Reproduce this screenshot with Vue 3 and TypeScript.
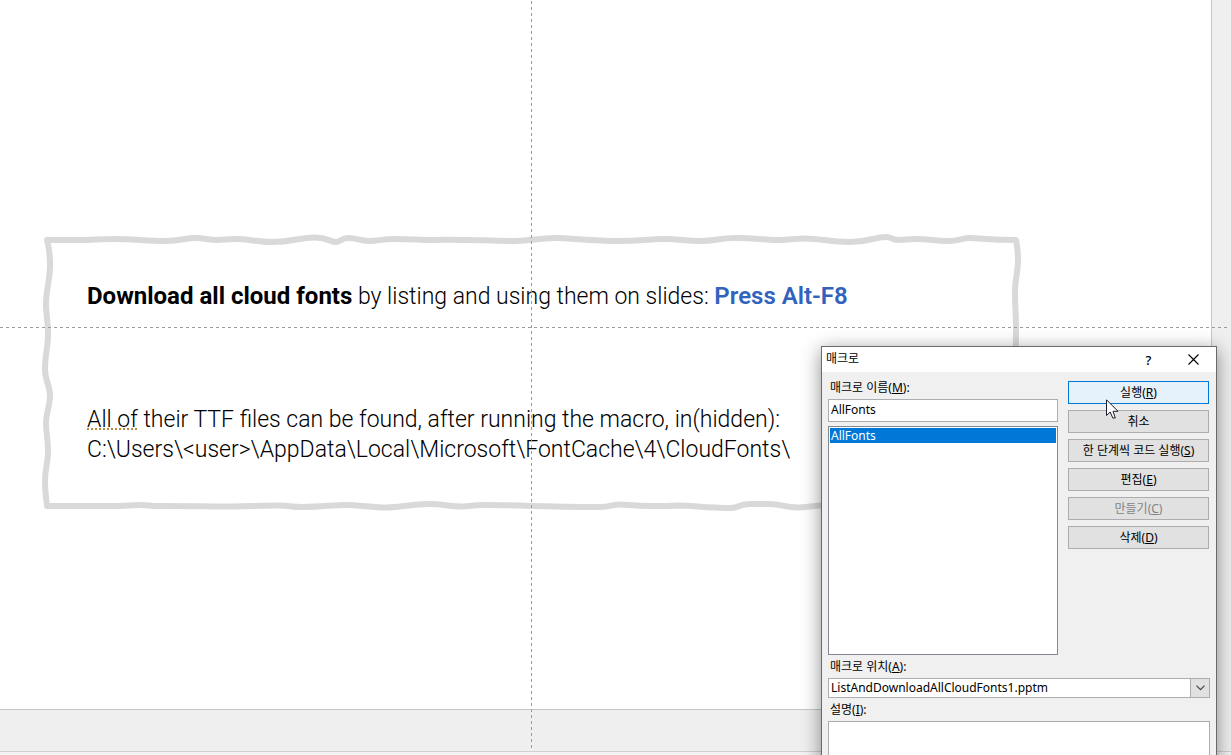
<script setup lang="ts">
import { ref } from 'vue'

interface Action {
  label: string
  key?: string
  disabled?: boolean
  primary?: boolean
}

const actions: Action[] = [
  { label: '실행', key: 'R', primary: true },
  { label: '취소' },
  { label: '한 단계씩 코드 실행', key: 'S' },
  { label: '편집', key: 'E' },
  { label: '만들기', key: 'C', disabled: true },
  { label: '삭제', key: 'D' },
]

const macros: string[] = ['AllFonts']
const selected = ref<string>('AllFonts')
const macroName = ref<string>('AllFonts')
const location = ref<string>('ListAndDownloadAllCloudFonts1.pptm')
const description = ref<string>('')

function choose(name: string): void {
  selected.value = name
  macroName.value = name
}
</script>

<template>
  <div class="editor">
    <main class="slide">
      <section class="sketch-box">
        <svg class="sketch-frame" viewBox="0 0 978 274" preserveAspectRatio="none" aria-hidden="true">
          <path
            d="M5 5C14 5 25 5 35 5C50 5 58 4 73 4C90 4 105 6 123 6C139 6 143 3 154 3C163 3 166 5 176 5C183 5 185 4 193 4C207 4 215 7 230 7C252 7 256 2.500 273 2.500C286 2.500 288 7 294 7C298 7 299 3 306 3C316 3 319 6 328 6C336 6 340 4 352 4C368 4 378 5 388 5C420 4 445 6 473 6C490 6 495 3 513 3C530 3 548 6 578 6C600 6 604 4 623 4C638 4 643 6 658 6C675 6 676 3 693 3C715 3 723 5 738 5C746 5 753 3.500 763 3.500C780 3.500 785 7 808 7C828 7 832 2 844 2C850 2 850 5 857 5C863 5 866 4 873 4C888 4 893 6 906 6C918 6 919 3 928 3C938 3 947 5 974 5C975 12 976 14 976 25C976 38 973 44 973 56C973 72 974 80 974 92C974 130 972 150 974 180C976 215 972 240 975 271C940 273 905 268 860 270C835 272 815 269 779 270.500C769 271 765 272.500 756 272.500C742 272.500 740 269 728 269C715 269 713 269 708 269C697 269 698 273 688 273C665 273 650 270.500 636 270.500C626 271 618 271 608 271C592 271 585 269.500 578 269.500C570 269.500 568 272 558 272C520 272 470 270 442 270C430 270 425 271.500 418 271.500C404 271 398 269 388 269C368 269 358 272.500 345 272.500C330 272.500 318 270 303 270C290 270 280 272 260 272C250 272 246 270.500 238 270.500C218 270.500 200 271.500 178 271.500C162 271 128 271 118 271C106 271 108 270 98 270C88 270 84 271 68 271L5 271C4 261 3 258 3 246C3 233 6 229 6 216C6 203 4 199 4 188C4 178 8 172 8 160C8 151 3 146 3 134C3 119 6 113 6 99C6 85 4 80 4 69C4 54 8 46 8 30C8 18 7 12 5 5Z"
            vector-effect="non-scaling-stroke"
          />
        </svg>
        <p class="line">
          <strong class="heavy">Download all cloud fonts</strong> by listing and using them on slides:
          <strong class="accent">Press Alt-F8</strong>
        </p>
        <p class="line path-note">
          <span class="grammar">All of</span> their TTF files can be found, after running the macro, in(hidden):<br />
          C:\Users\&lt;user&gt;\AppData\Local\Microsoft\FontCache\4\CloudFonts\
        </p>
      </section>
    </main>
    <div class="gutter"></div>
    <div class="pasteboard"></div>
    <div class="status"></div>
    <i class="guide guide-v"></i>
    <i class="guide guide-h"></i>

    <section class="dialog" role="dialog" aria-labelledby="dialog-title">
      <header class="titlebar">
        <h1 id="dialog-title">매크로</h1>
        <button class="caption-btn" type="button" aria-label="도움말">?</button>
        <button class="caption-btn" type="button" aria-label="닫기">
          <svg width="11" height="11" viewBox="0 0 11 11" aria-hidden="true">
            <path d="M0.500 0.500L10.500 10.500M10.500 0.500L0.500 10.500" fill="none" stroke="#000" stroke-width="1.100" />
          </svg>
        </button>
      </header>
      <form class="content" @submit.prevent>
        <div class="upper">
          <div class="names">
            <label for="macro-name">매크로 이름(<u>M</u>):</label>
            <input id="macro-name" v-model="macroName" class="field" type="text" />
            <ul class="list" role="listbox" aria-label="매크로">
              <li
                v-for="m in macros"
                :key="m"
                role="option"
                :aria-selected="m === selected"
                :class="{ active: m === selected }"
                @click="choose(m)"
              >{{ m }}</li>
            </ul>
          </div>
          <div class="actions">
            <button
              v-for="a in actions"
              :key="a.label"
              type="button"
              class="action"
              :class="{ primary: a.primary }"
              :disabled="a.disabled"
            >{{ a.label }}<template v-if="a.key">(<u>{{ a.key }}</u>)</template></button>
          </div>
        </div>
        <label for="macro-location">매크로 위치(<u>A</u>):</label>
        <div class="combo">
          <select id="macro-location" v-model="location">
            <option>ListAndDownloadAllCloudFonts1.pptm</option>
          </select>
          <span class="arrow">
            <svg width="9" height="6" viewBox="0 0 9 6" aria-hidden="true">
              <path d="M0.500 0.700L4.500 4.700L8.500 0.700" fill="none" stroke="#444" stroke-width="1.200" />
            </svg>
          </span>
        </div>
        <label for="macro-description">설명(<u>I</u>):</label>
        <textarea id="macro-description" v-model="description" class="description"></textarea>
      </form>
      <svg class="cursor" width="13" height="20" viewBox="0 0 13 20" aria-hidden="true">
        <path d="M0.500 0.800V16.500L4.200 13L6.800 19H9.300L7 12.300H12Z" fill="#fff" stroke="#1a1a2a" stroke-width="1" />
      </svg>
    </section>
  </div>
</template>

<style>
body {
  margin: 0;
  overflow: hidden;
}
</style>

<style scoped>
* {
  box-sizing: border-box;
}
.editor {
  position: relative;
  display: grid;
  grid-template-columns: 1fr 20px;
  grid-template-rows: 1fr 42px 4px;
  height: 100vh;
  overflow: hidden;
  background: #efefef;
}
.slide {
  padding: 235px 191px 0 42px;
  background: #fff;
}
.gutter {
  border-left: 1px solid #c6c6c6;
}
.pasteboard {
  grid-column: 1 / -1;
  background: linear-gradient(#c6c6c6, #c6c6c6) 0 0 / calc(100% - 20px) 1px no-repeat;
}
.status {
  grid-column: 1 / -1;
  border-top: 1px solid #d0d0d0;
  background: #f3f3f3;
}
.guide {
  position: absolute;
}
.guide-v {
  top: 1px;
  bottom: 7px;
  left: 531px;
  width: 1px;
  background: repeating-linear-gradient(to bottom, #9b9b9b 0 3px, transparent 3px 6px);
}
.guide-h {
  top: 327px;
  left: 0;
  right: 4px;
  height: 1px;
  background: repeating-linear-gradient(to right, #9b9b9b 0 3px, transparent 3px 6px);
}
.sketch-box {
  position: relative;
  height: 274px;
  padding: 46px 45px;
}
.sketch-frame {
  position: absolute;
  inset: 0;
  width: 100%;
  height: 100%;
  overflow: visible;
}
.sketch-frame path {
  fill: none;
  stroke: #d9d9d9;
  stroke-width: 6px;
  stroke-linejoin: round;
}
.line {
  position: relative;
  margin: 0;
  font: 300 23px/30px Roboto, 'Open Sans', sans-serif;
  color: #000;
  white-space: nowrap;
}
.path-note {
  margin-top: 93px;
}
.heavy,
.accent {
  font-size: 24px;
  font-weight: 700;
}
.accent {
  font-weight: 600;
  color: #3163bd;
}
.grammar {
  background: repeating-linear-gradient(to right, #b8893c 0 2px, transparent 2px 4px) 0 calc(100% - 3px) / 100% 2px no-repeat;
}
.dialog {
  position: absolute;
  top: 346px;
  left: 821px;
  width: 396px;
  height: 460px;
  border: 1px solid #6a6a6a;
  background: #f0f0f0;
  box-shadow: 0 4px 18px rgba(0, 0, 0, 0.45);
  font: 12px/16px 'Noto Sans', 'Noto Sans CJK KR', sans-serif;
  color: #000;
}
.titlebar {
  display: flex;
  align-items: center;
  height: 25px;
  padding-left: 4px;
  background: #fff;
}
.titlebar h1 {
  flex: 1;
  margin: 0 0 2px;
  font: inherit;
}
.caption-btn {
  display: flex;
  align-items: center;
  justify-content: center;
  width: 45px;
  height: 25px;
  padding: 0;
  border: 0;
  background: transparent;
  font: 500 13px/16px 'Noto Sans', sans-serif;
  color: #000;
}
.content {
  display: flex;
  flex-direction: column;
  padding: 8px 6px 0;
}
.upper {
  display: flex;
  gap: 10px;
  margin-bottom: 4px;
}
.names {
  display: flex;
  flex: 1;
  flex-direction: column;
}
label {
  display: block;
  height: 19px;
  padding-left: 2px;
  line-height: 16px;
}
.field {
  height: 23px;
  padding: 0 2px 2px;
  border: 1px solid #abadb3;
  background: #fff;
  font: inherit;
  color: #000;
  outline: 0;
}
.list {
  height: 229px;
  margin: 4px 0 0;
  padding: 1px;
  border: 1px solid #828790;
  background: #fff;
  list-style: none;
}
.list li {
  height: 15px;
  padding-left: 1px;
  line-height: 15px;
}
.list .active {
  background: #0078d7;
  color: #fff;
}
.actions {
  display: flex;
  flex-direction: column;
  gap: 6px;
  width: 141px;
  margin: 1px 1px 0 0;
}
.action {
  height: 23px;
  padding: 0;
  border: 1px solid #adadad;
  background: #e1e1e1;
  font: inherit;
  color: #000;
  white-space: nowrap;
}
.action.primary {
  border-color: #0078d7;
  background: #e5f1fb;
}
.action:disabled {
  color: #838383;
}
.combo {
  position: relative;
  display: flex;
  height: 20px;
  margin-bottom: 4px;
}
.combo select {
  flex: 1;
  appearance: none;
  padding: 0 22px 0 2px;
  border: 1px solid #abadb3;
  border-radius: 0;
  background: #fff;
  font: inherit;
  color: #000;
}
.arrow {
  position: absolute;
  top: 0;
  right: 0;
  display: flex;
  align-items: center;
  justify-content: center;
  width: 20px;
  height: 20px;
  border: 1px solid #adadad;
  background: #e1e1e1;
  pointer-events: none;
}
.description {
  height: 70px;
  border: 1px solid #abadb3;
  background: #fff;
  font: inherit;
  resize: none;
}
.cursor {
  position: absolute;
  top: 52px;
  left: 284px;
}
</style>
